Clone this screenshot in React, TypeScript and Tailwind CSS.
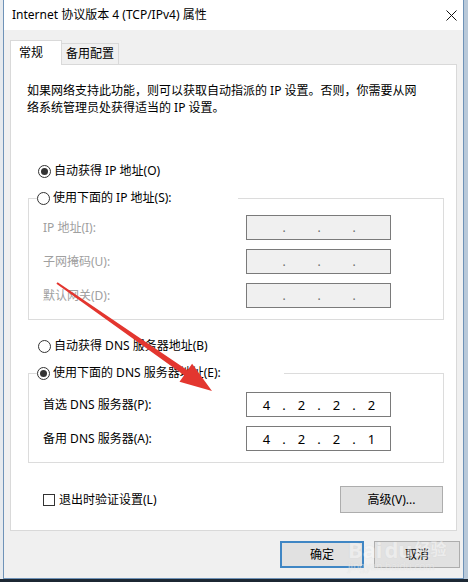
import React from "react";

function Radio({ checked }: { checked?: boolean }) {
  return (
    <div className="w-[13px] h-[13px] rounded-full border border-[#333333] bg-white flex items-center justify-center shrink-0">
      {checked ? <div className="w-[7px] h-[7px] rounded-full bg-[#333333]" /> : null}
    </div>
  );
}

function IpBox({ values, disabled }: { values: string[]; disabled?: boolean }) {
  const cell = "w-[29px] text-center";
  const dot = "w-[6px] text-center";
  return (
    <div
      className={
        "w-[145px] h-[25px] border border-[#7a7a7a] flex items-center pl-[5px] leading-[16px] " +
        (disabled ? "bg-[#f0f0f0] text-[#6d6d6d]" : "bg-white text-[#000000] text-[13px]")
      }
    >
      <span className={cell}>{values[0]}</span>
      <span className={dot}>.</span>
      <span className={cell}>{values[1]}</span>
      <span className={dot}>.</span>
      <span className={cell}>{values[2]}</span>
      <span className={dot}>.</span>
      <span className={cell}>{values[3]}</span>
    </div>
  );
}

function Row({ label, values, disabled }: { label: string; values: string[]; disabled?: boolean }) {
  return (
    <div className="flex items-center h-[25px] pl-[6px]">
      <div className={"w-[203px] leading-[16px] " + (disabled ? "text-[#a0a0a0]" : "text-black")}>{label}</div>
      <IpBox values={values} disabled={disabled} />
    </div>
  );
}

export default function App() {
  return (
    <div className="w-[468px] h-[582px] relative overflow-hidden bg-[#1c2733] font-['Noto_Sans','Noto_Sans_CJK_SC',sans-serif] text-[12px] text-black">
      <div className="flex h-[579px]">
        <div className="w-[3px] bg-[#e6eaee]" />
        <div className="w-[461px] border-l border-r border-b border-[#6f93b8] bg-[#f0f0f0] flex flex-col">
          {/* Title bar */}
          <div className="h-[30px] bg-white flex items-center justify-between pl-[8px] pr-[6px]">
            <span className="leading-[16px]">Internet 协议版本 4 (TCP/IPv4) 属性</span>
            <svg width="11" height="11" viewBox="0 0 11 11">
              <path d="M0.5 0.5 L10.5 10.5 M10.5 0.5 L0.5 10.5" stroke="#111" strokeWidth="1" />
            </svg>
          </div>

          {/* Tabs */}
          <div className="mt-[10px] flex items-end h-[24px] px-[6px]">
            <div className="relative z-10 -mb-[1px] w-[52px] h-[25px] bg-white border-l border-t border-r border-[#d9d9d9] pl-[8px] pt-[4px] leading-[16px]">
              常规
            </div>
            <div className="w-[57px] h-[21px] border-t border-r border-[#d9d9d9] bg-[#f0f0f0] pl-[4px] pt-[2px] leading-[16px]">
              备用配置
            </div>
          </div>

          {/* Panel */}
          <div className="mx-[6px] w-[447px] bg-white border border-[#d9d9d9] pl-[16px] pt-[17px] pb-[17px] flex flex-col">
            <div className="leading-[17px]">
              <div>如果网络支持此功能，则可以获取自动指派的 IP 设置。否则，你需要从网</div>
              <div>络系统管理员处获得适当的 IP 设置。</div>
            </div>

            <div className="mt-[47px] h-[16px] flex items-center pl-[11px] gap-[3px]">
              <Radio checked />
              <span className="leading-[16px]">自动获得 IP 地址(O)</span>
            </div>

            <fieldset className="mt-[11px] ml-[1px] w-[416px] border border-[#dcdcdc] pl-[8px] pb-[11px]">
              <legend className="w-[201px] h-[16px] flex items-center gap-[3px]">
                <Radio />
                <span className="leading-[16px]">使用下面的 IP 地址(S):</span>
              </legend>
              <div className="mt-[9px] flex flex-col gap-[9px]">
                <Row label="IP 地址(I):" values={["", "", "", ""]} disabled />
                <Row label="子网掩码(U):" values={["", "", "", ""]} disabled />
                <Row label="默认网关(D):" values={["", "", "", ""]} disabled />
              </div>
            </fieldset>

            <div className="mt-[18px] h-[16px] flex items-center pl-[11px] gap-[3px]">
              <Radio />
              <span className="leading-[16px]">自动获得 DNS 服务器地址(B)</span>
            </div>

            <fieldset className="mt-[11px] ml-[1px] w-[416px] border border-[#dcdcdc] pl-[8px] pb-[11px]">
              <legend className="w-[247px] h-[16px] flex items-center gap-[3px]">
                <Radio checked />
                <span className="leading-[16px]">使用下面的 DNS 服务器地址(E):</span>
              </legend>
              <div className="mt-[11px] flex flex-col gap-[9px]">
                <Row label="首选 DNS 服务器(P):" values={["4", "2", "2", "2"]} />
                <Row label="备用 DNS 服务器(A):" values={["4", "2", "2", "1"]} />
              </div>
            </fieldset>

            <div className="mt-[23px] h-[27px] flex items-center justify-between pl-[16px] pr-[13px]">
              <div className="flex items-center gap-[4px]">
                <div className="w-[12px] h-[12px] border border-[#333333] bg-white" />
                <span className="leading-[16px]">退出时验证设置(L)</span>
              </div>
              <div className="w-[103px] h-[27px] bg-[#e1e1e1] border border-[#adadad] flex items-center justify-center leading-[16px]">
                高级(V)...
              </div>
            </div>
          </div>

          {/* Bottom buttons */}
          <div className="mt-[10px] flex justify-end gap-[10px] pr-[3px]">
            <div className="w-[84px] h-[27px] bg-[#e1e1e1] border-2 border-[#3f86c4] flex items-center justify-center leading-[16px]">
              确定
            </div>
            <div className="w-[86px] h-[27px] bg-[#e1e1e1] border border-[#adadad] flex items-center justify-center leading-[16px]">
              取消
            </div>
          </div>
        </div>
        <div className="w-[4px] bg-[#b9c9d9]" />
      </div>

      {/* Baidu watermark */}
      <div className="absolute left-[348px] top-[538px] flex flex-col items-start pointer-events-none select-none opacity-50">
        <div className="flex items-end gap-[2px] leading-[22px]">
          <span className="text-[22px] font-bold text-[#f8f8f8] [text-shadow:0_0_1px_#c8c8c8]">Bai</span>
          <span className="text-[22px] font-bold text-[#f8f8f8] [text-shadow:0_0_1px_#c8c8c8]">du</span>
          <span className="text-[16px] font-bold text-[#f8f8f8] [text-shadow:0_0_1px_#c8c8c8]">经验</span>
        </div>
        <span className="text-[10px] leading-[12px] text-[#eeeeee] [text-shadow:0_0_1px_#cccccc]">jingyan.baidu.com</span>
      </div>

      {/* Red annotation arrow */}
      <svg className="absolute left-0 top-0 pointer-events-none" width="468" height="582" viewBox="0 0 468 582">
        <polygon
          points="57.6,282.2 187.5,370.2 192.1,363.7 212,391 179.5,381.7 184.1,375.2 56.4,283.8"
          fill="#e3362f"
        />
      </svg>
    </div>
  );
}
